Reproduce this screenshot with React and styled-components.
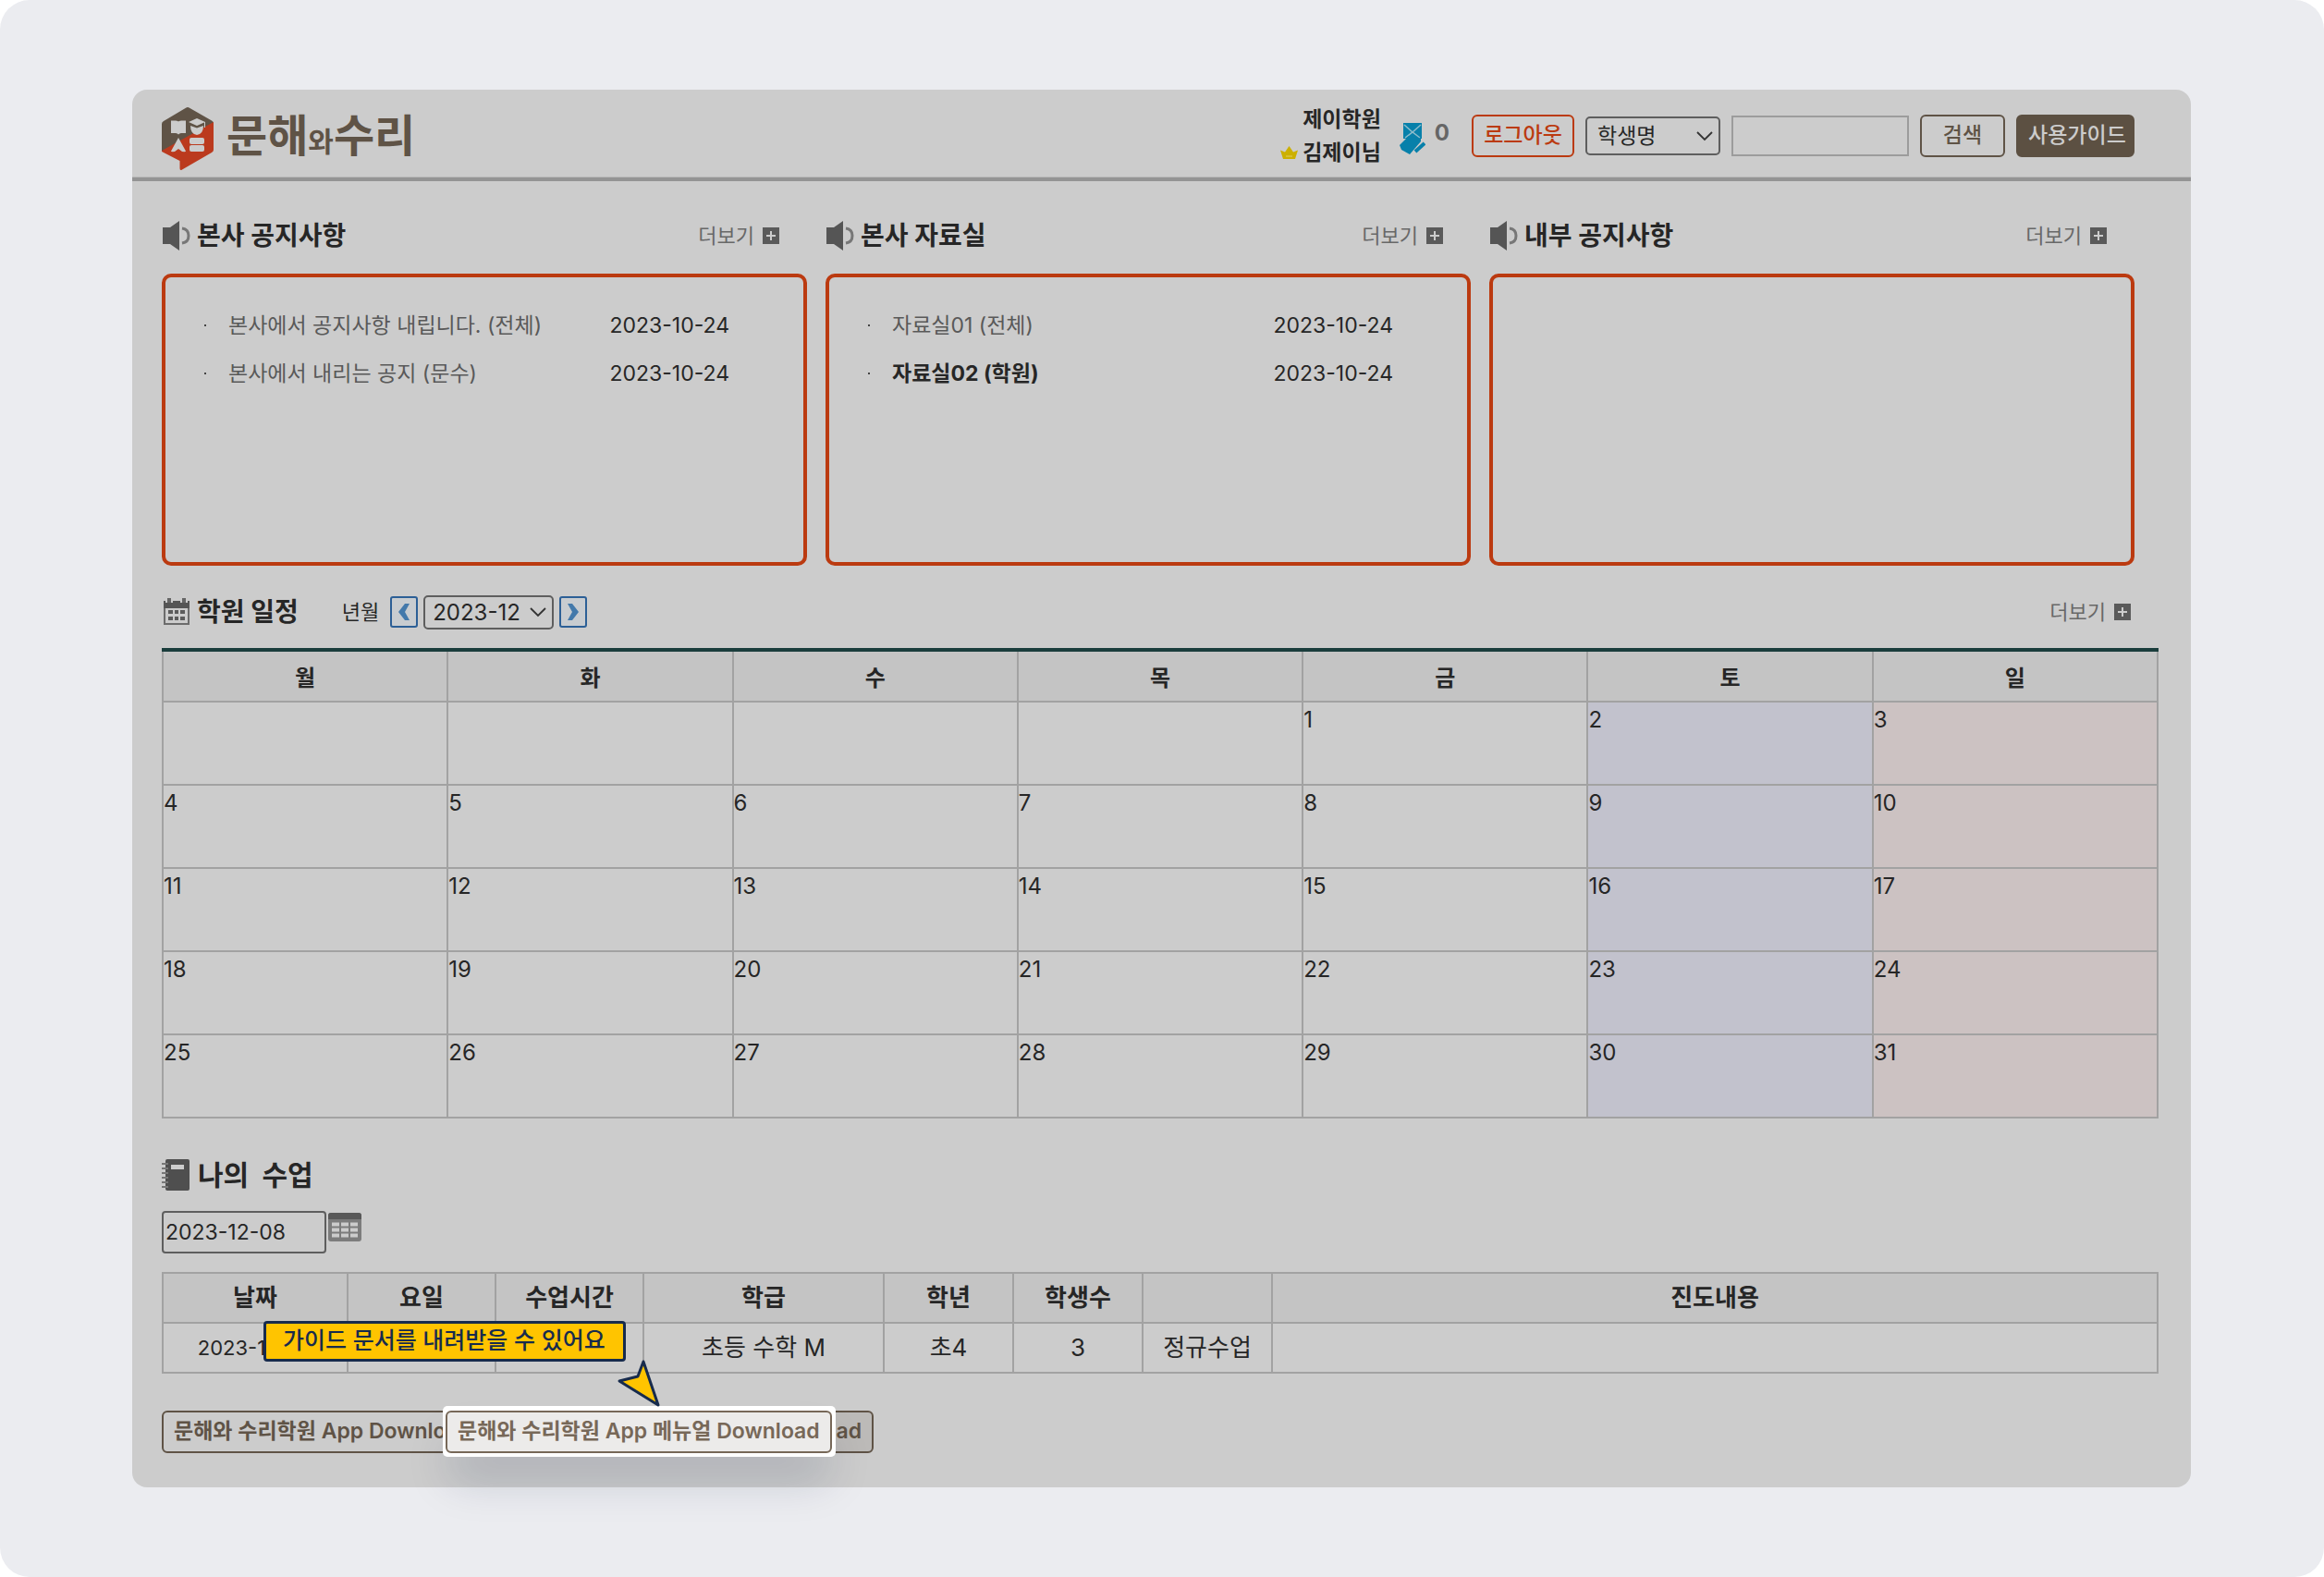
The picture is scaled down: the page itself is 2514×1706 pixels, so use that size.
import React from "react";
import styled, { createGlobalStyle } from "styled-components";

const FONT = 'Inter, "Noto Sans CJK KR", sans-serif';

const GlobalStyle = createGlobalStyle`
  * { box-sizing: border-box; }
  html, body, #root { min-height: 100vh; }
  body { margin: 0; background: #fff; font-family: ${FONT}; color: #262626; font-size: 24px; }
  button, input, select { font-family: inherit; color: inherit; }
`;

const Page = styled.div`
  min-height: 100vh;
  padding: 97px 144px 97px 143px;
  background: #ebecf0;
  border-radius: 32px;
`;

const Card = styled.div`
  position: relative;
  min-height: calc(100vh - 194px);
  background: #ccc;
  border-radius: 16px;
`;

const Header = styled.header`
  height: 99px;
  padding: 5px 61px 0 32px;
  display: flex;
  align-items: center;
  justify-content: space-between;
  border-bottom: 4px solid #949494;
  box-shadow: inset 0 -1px #b8b8b8;
`;

const Brand = styled.a`
  display: flex;
  align-items: center;
  gap: 14px;
  margin-top: 6px;
  color: #5f5346;
  text-decoration: none;
`;

const BrandName = styled.span`
  font-size: 48px;
  line-height: 60px;
  font-weight: 700;
  small { font-size: 30px; }
`;

const Tools = styled.form`
  display: flex;
  align-items: center;
  gap: 12px;
`;

const User = styled.div`
  display: grid;
  justify-items: end;
  font-size: 23px;
  line-height: 36px;
  font-weight: 700;
  margin-right: 8px;
  span { display: flex; align-items: center; gap: 5px; }
`;

const Coupon = styled.span`
  display: flex;
  align-items: flex-start;
  gap: 10px;
  margin: 6px 12px 0 0;
  color: #666;
  font-weight: 700;
  line-height: 24px;
`;

const Button = styled.button`
  height: 46px;
  width: ${(p) => p.$width || "auto"};
  padding: 0 11px 2px;
  font-size: 23px;
  line-height: 36px;
  font-weight: ${(p) => p.$weight || 500};
  white-space: nowrap;
  color: ${(p) => p.$color || "#5f5346"};
  background: ${(p) => p.$fill || "transparent"};
  border: 2px solid ${(p) => p.$line || p.$color || "#5f5346"};
  border-radius: 6px;
`;

const SelectWrap = styled.span`
  display: grid;
  align-items: center;
  width: ${(p) => p.$width};
  height: ${(p) => p.$height};
  > * { grid-area: 1 / 1; }
  svg { justify-self: end; margin-right: 7px; pointer-events: none; }
`;

const Select = styled.select`
  appearance: none;
  width: 100%;
  height: 100%;
  padding: 0 ${(p) => p.$pad};
  font-size: ${(p) => p.$size};
  background: transparent;
  border: 2px solid #5e5e5e;
  border-radius: 5px;
`;

const SearchInput = styled.input`
  width: 192px;
  height: 44px;
  background: transparent;
  border: 2px solid #9c9c9c;
`;

const Main = styled.main`
  padding: 37px 35px 36px 32px;
`;

const Boards = styled.div`
  display: grid;
  grid-template-columns: repeat(3, 1fr);
  gap: 20px;
  padding-right: 26px;
`;

const Title = styled.h2`
  display: flex;
  align-items: center;
  gap: 6px;
  margin: 0;
  font-size: 28px;
  line-height: 44px;
  font-weight: 700;
`;

const TitleRow = styled.div`
  display: flex;
  align-items: center;
  justify-content: space-between;
  height: 44px;
  padding-right: 30px;
`;

const More = styled.a`
  display: flex;
  align-items: center;
  gap: 9px;
  font-size: 22px;
  line-height: 32px;
  color: #686868;
  text-decoration: none;
`;

const Board = styled.ul`
  height: 316px;
  margin: 19px 0 0;
  padding: 26px 80px 0 40px;
  list-style: none;
  border: 4px solid #bb3a10;
  border-radius: 10px;
`;

const Post = styled.li`
  display: grid;
  grid-template-columns: 28px 1fr auto;
  align-items: center;
  height: 52px;
  font-size: 23px;
  line-height: 52px;
  a {
    color: ${(p) => (p.$unread ? "#262626" : "#595959")};
    font-weight: ${(p) => (p.$unread ? 700 : 400)};
    text-decoration: none;
  }
`;

const Dot = styled.i`
  width: 2px;
  height: 2px;
  margin-left: 2px;
  background: #444;
`;

const Schedule = styled.div`
  display: flex;
  align-items: center;
  justify-content: space-between;
  height: 44px;
  margin-top: 28px;
  padding-right: 30px;
`;

const Picker = styled.div`
  display: flex;
  align-items: center;
  gap: 6px;
  h2 { margin-right: 41px; }
  label { font-size: 22px; margin-right: 6px; padding-bottom: 4px; }
`;

const Step = styled.button`
  display: grid;
  place-items: center;
  width: 30px;
  height: 34px;
  padding: 0;
  background: #c8ccd0;
  border: 2px solid #2c5f96;
  border-radius: 3px;
`;

const Table = styled.table`
  width: 100%;
  table-layout: fixed;
  border-collapse: collapse;
  th, td { border: 2px solid #a2a2a2; }
  th { background: #c4c4c4; font-weight: 700; padding: 0; }
`;

const Calendar = styled(Table)`
  margin-top: 17px;
  border-top: 4px solid #1a3d3c;
  th { height: 56px; font-size: 24px; border-top: 4px solid #1a3d3c; }
  td { height: 90px; padding: 3px 0 0; vertical-align: top; line-height: 32px; }
  td:nth-child(6) { background: #c2c2cd; }
  td:nth-child(7) { background: #ccc2c2; }
`;

const Lessons = styled(Table)`
  margin-top: 20px;
  text-align: center;
  font-size: 26px;
  th, td { height: 54px; padding: 0; line-height: 36px; }
  td:first-child { font-size: 22px; }
`;

const ClassTitle = styled(Title)`
  margin-top: 39px;
  gap: 8px;
  font-size: 30px;
  white-space: pre;
`;

const DateRow = styled.div`
  display: flex;
  align-items: flex-start;
  gap: 2px;
  margin-top: 17px;
`;

const DateInput = styled.input`
  width: 178px;
  height: 46px;
  padding: 0 2px;
  font-size: 23px;
  background: transparent;
  border: 2px solid #5e5e5e;
  border-radius: 4px;
`;

const IconButton = styled.button`
  display: block;
  padding: 2px 0 0;
  border: 0;
  background: none;
`;

const Downloads = styled.div`
  position: relative;
  display: flex;
  gap: 4px;
  margin-top: 40px;
`;

const Spotlight = styled.div`
  position: absolute;
  left: 304px;
  top: -5px;
  padding: 5px 4px 4px 3px;
  background: #fff;
  border-radius: 5px;
  box-shadow: 0 32px 48px -8px rgba(9, 30, 66, 0.18);
  button { display: block; }
`;

const Tip = styled.div`
  position: absolute;
  left: 110px;
  top: -97px;
  padding: 0 19px 2px 18px;
  font-size: 25px;
  line-height: 36px;
  font-weight: 500;
  white-space: nowrap;
  color: #172b4d;
  background: #ffc400;
  border: 3px solid #172b4d;
  border-radius: 4px;
`;

const Pointer = styled.svg`
  position: absolute;
  left: 491px;
  top: -57px;
`;

const Logo = () => (
  <svg width="56" height="68" viewBox="0 0 56 68" aria-hidden="true">
    <path d="M26 .8Q28-.6 30 .8L54 14.5Q56 15.5 56 17L0 48V18Q0 16 2 15Z" fill="#5f5346" />
    <path d="M56 16V46Q56 48 54 49L22 67.500Q19.500 69 19.500 66V58L1 48.500Q0 48 0 47Z" fill="#bb3a1e" />
    <g fill="#ccc">
      <path d="M10 14.500h5q3 0 3 1.500q0-1.500 3-1.500h5V28h-5q-2 0-3 1.500Q17 28 15 28h-5Z" />
      <path d="M38 12L47 16L38 20L29 16Z" />
      <path d="M31 20l7 2.500L45 20q0 9-7 10q-7-1-7-10Z" />
      <rect x="46" y="16" width="1" height="6" />
      <path d="M18 33L26 47.500Q26 48.500 22 48L18 45L14 48Q10 48.500 10 47.500Z" />
      <rect x="30" y="33" width="16" height="7" rx="2" />
      <rect x="30" y="41" width="16" height="7" rx="2" />
    </g>
  </svg>
);

const Speaker = () => (
  <svg width="32" height="34" viewBox="0 0 32 34" aria-hidden="true">
    <path d="M1 8h8L19 1v32L9 26H1Z" fill="#555" />
    <path d="M22 9q7 1 7 8t-7 8" fill="none" stroke="#777" strokeWidth="3" />
  </svg>
);

const Plus = () => (
  <svg width="18" height="18" viewBox="0 0 18 18" aria-hidden="true">
    <rect width="18" height="18" fill="#5a5a5a" />
    <path d="M9 4v10M4 9h10" stroke="#ccc" strokeWidth="2" />
  </svg>
);

const Chevron = () => (
  <svg width="20" height="12" viewBox="0 0 20 12" aria-hidden="true">
    <path d="M2 2l8 8 8-8" fill="none" stroke="#333" strokeWidth="1.8" />
  </svg>
);

const Arrow = ({ next }) => (
  <svg width="14" height="20" viewBox="0 0 14 20" aria-hidden="true">
    <path d={next ? "M1 1h5l7 9-7 9H1l5-9Z" : "M13 1H8l-7 9 7 9h5l-5-9Z"} fill="#4379ab" />
  </svg>
);

const MonthIcon = () => (
  <svg width="32" height="30" viewBox="0 0 32 30" aria-hidden="true">
    <rect x="3" y="4" width="26" height="24" fill="none" stroke="#6c6c6c" strokeWidth="2" />
    <path d="M2 3h28v8H2Z" fill="#555" />
    <path d="M4 3h8M20 3h8" stroke="#ccc" strokeWidth="4" />
    <path d="M8 0v5M24 0v5" stroke="#666" strokeWidth="4" />
    <path d="M7 15h5M14 15h4M20 15h5M7 22h5M14 22h4M20 22h5" stroke="#5c5c5c" strokeWidth="4" />
  </svg>
);

const Notebook = () => (
  <svg width="31" height="36" viewBox="0 0 31 36" aria-hidden="true">
    <rect x="4" y="1" width="26" height="34" rx="2" fill="#4f4f4f" />
    <path d="M0 6h7M0 11h7M0 16h7M0 21h7M0 26h7M0 31h7" stroke="#777" strokeWidth="2" />
    <rect x="10" y="7" width="14" height="5" fill="#ccc" />
  </svg>
);

const GridIcon = () => (
  <svg width="36" height="31" viewBox="0 0 36 31" aria-hidden="true">
    <rect width="36" height="31" rx="3" fill="#7c7c7c" />
    <path d="M0 7V3q0-3 3-3h30q3 0 3 3v4Z" fill="#585858" />
    <path d="M4 12.500h28M4 18.500h28M4 24.500h28" stroke="#ccc" strokeWidth="4" />
    <path d="M13 10v18M23 10v18" stroke="#7c7c7c" strokeWidth="2" />
  </svg>
);

const Crown = () => (
  <svg width="19" height="14" viewBox="0 0 19 14" aria-hidden="true">
    <path d="M3 14L0 4.500l5 2L9.500 0L14 6.500l5-2L16 14Z" fill="#ccb000" />
    <path d="M6 11h7" stroke="#e0cf60" strokeWidth="1" />
  </svg>
);

const Ticket = () => (
  <svg width="28" height="36" viewBox="0 0 28 36" aria-hidden="true">
    <path d="M4 1h20v17H4Z" fill="#0780aa" />
    <path d="M5 3l9 8 9-8M6 17l8-6 8 6" fill="none" stroke="#8dbccb" strokeWidth="1.500" />
    <path d="M0 25L10 15L23 18V21L11 35L2 30Z" fill="#0780aa" />
    <path d="M17 32L27 23" stroke="#0780aa" strokeWidth="4" />
  </svg>
);

const MoreLink = () => (
  <More href="#more">더보기<Plus /></More>
);

const boards = [
  {
    title: "본사 공지사항",
    posts: [
      ["본사에서 공지사항 내립니다. (전체)", "2023-10-24"],
      ["본사에서 내리는 공지 (문수)", "2023-10-24"],
    ],
  },
  {
    title: "본사 자료실",
    posts: [
      ["자료실01 (전체)", "2023-10-24"],
      ["자료실02 (학원)", "2023-10-24", true],
    ],
  },
  { title: "내부 공지사항", posts: [] },
];

const days = ["월", "화", "수", "목", "금", "토", "일"];
const weeks = [0, 1, 2, 3, 4].map((w) => days.map((_, d) => w * 7 + d - 3));
const lessonWidths = [200, 160, 160, 260, 140, 140, 140];
const lessonHeads = ["날짜", "요일", "수업시간", "학급", "학년", "학생수", "", "진도내용"];
const lesson = ["2023-12-08", "", "", "초등 수학 M", "초4", "3", "정규수업", ""];

export default function App() {
  return (
    <Page>
      <GlobalStyle />
      <Card>
        <Header>
          <Brand href="#home">
            <Logo />
            <BrandName>문해<small>와</small>수리</BrandName>
          </Brand>
          <Tools onSubmit={(e) => e.preventDefault()}>
            <User>
              <span>제이학원</span>
              <span><Crown />김제이님</span>
            </User>
            <Coupon><Ticket />0</Coupon>
            <Button type="button" $width="111px" $color="#bb3a10">로그아웃</Button>
            <SelectWrap $width="146px" $height="42px">
              <Select $size="23px" $pad="11px" aria-label="검색 조건">
                <option>학생명</option>
              </Select>
              <Chevron />
            </SelectWrap>
            <SearchInput type="text" aria-label="검색어" />
            <Button type="submit" $width="92px">검색</Button>
            <Button type="button" $width="128px" $color="#ccc" $fill="#5c5042" $line="#5c5042">사용가이드</Button>
          </Tools>
        </Header>
        <Main>
          <Boards>
            {boards.map((b) => (
              <section key={b.title}>
                <TitleRow>
                  <Title><Speaker />{b.title}</Title>
                  <MoreLink />
                </TitleRow>
                <Board>
                  {b.posts.map(([text, date, unread]) => (
                    <Post key={text} $unread={unread}>
                      <Dot />
                      <a href="#post">{text}</a>
                      <time>{date}</time>
                    </Post>
                  ))}
                </Board>
              </section>
            ))}
          </Boards>
          <Schedule>
            <Picker>
              <Title><MonthIcon />학원 일정</Title>
              <label htmlFor="month">년월</label>
              <Step type="button" aria-label="이전 달"><Arrow /></Step>
              <SelectWrap $width="141px" $height="37px">
                <Select id="month" $size="24px" $pad="8px">
                  <option>2023-12</option>
                </Select>
                <Chevron />
              </SelectWrap>
              <Step type="button" aria-label="다음 달"><Arrow next /></Step>
            </Picker>
            <MoreLink />
          </Schedule>
          <Calendar>
            <thead>
              <tr>{days.map((d) => <th key={d} scope="col">{d}</th>)}</tr>
            </thead>
            <tbody>
              {weeks.map((week) => (
                <tr key={week[6]}>
                  {week.map((n) => <td key={n}>{n > 0 ? n : ""}</td>)}
                </tr>
              ))}
            </tbody>
          </Calendar>
          <ClassTitle><Notebook />{"나의  수업"}</ClassTitle>
          <DateRow>
            <DateInput type="text" defaultValue="2023-12-08" aria-label="수업 날짜" />
            <IconButton type="button" aria-label="달력 열기"><GridIcon /></IconButton>
          </DateRow>
          <Lessons>
            <colgroup>
              {lessonWidths.map((w, i) => <col key={i} width={w} />)}
              <col />
            </colgroup>
            <thead>
              <tr>{lessonHeads.map((h, i) => <th key={i} scope="col">{h}</th>)}</tr>
            </thead>
            <tbody>
              <tr>{lesson.map((c, i) => <td key={i}>{c}</td>)}</tr>
            </tbody>
          </Lessons>
          <Downloads>
            <Button type="button" $weight={600}>문해와 수리학원 App Download</Button>
            <Button type="button" $weight={600} $fill="#bcbab8">문해와 수리학원 App 메뉴얼 Download</Button>
            <Spotlight>
              <Button type="button" $weight={600} $color="#776858" $fill="#ecebea">
                문해와 수리학원 App 메뉴얼 Download
              </Button>
            </Spotlight>
            <Tip role="tooltip">가이드 문서를 내려받을 수 있어요</Tip>
            <Pointer width="48" height="54" viewBox="0 0 48 54" aria-hidden="true">
              <path d="M30 4L24 20L4 25L46 51Z" fill="#ffc400" stroke="#172b4d" strokeWidth="3" strokeLinejoin="round" />
            </Pointer>
          </Downloads>
        </Main>
      </Card>
    </Page>
  );
}
